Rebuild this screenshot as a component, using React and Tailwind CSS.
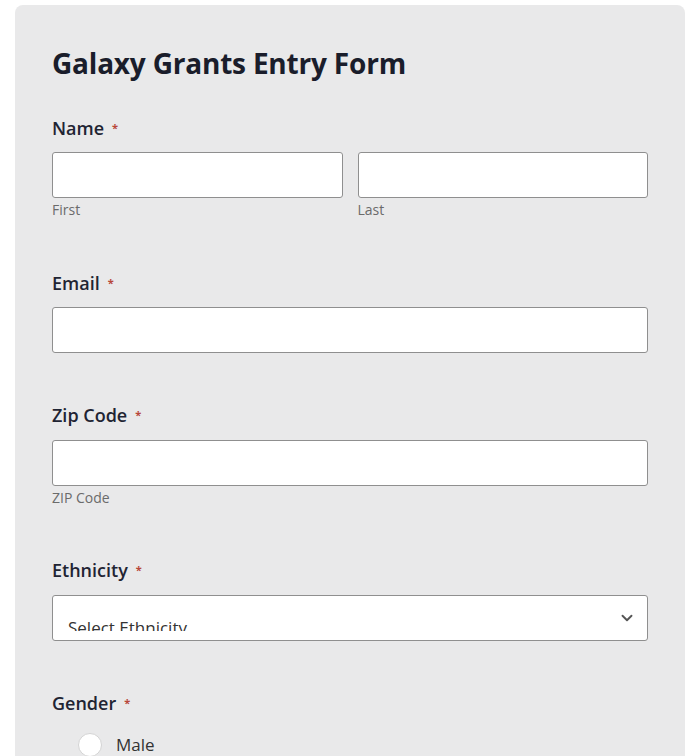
import { ChevronDown } from 'lucide-react';

function Label({ children }) {
  return (
    <div className="flex items-center gap-2 text-[18px] font-semibold leading-6 text-[#1f2433]">
      {children}
      <span className="text-[11px] font-bold text-[#b8473a]">*</span>
    </div>
  );
}

function Field({ sub }) {
  return (
    <div className="flex-1">
      <div className="h-[46px] rounded-[3px] border border-[#8f8f8f] bg-white"></div>
      {sub && <div className="mt-[2px] text-[14px] leading-5 text-[#6b6b6b]">{sub}</div>}
    </div>
  );
}

export default function App() {
  return (
    <div className="min-h-screen bg-white px-[15px] pt-[5px]" style={{ fontFamily: '"Open Sans", "Noto Sans", sans-serif' }}>
      <div className="h-[760px] overflow-hidden rounded-t-[8px] bg-[#e9e9ea] px-[37px] pt-[40px]">
        <h1 className="text-[28px] font-bold leading-9 tracking-[-0.2px] text-[#1a1d2b]">Galaxy Grants Entry Form</h1>

        <div className="mt-[35px]">
          <Label>Name</Label>
          <div className="mt-[12px] flex gap-[15px]">
            <Field sub="First" />
            <Field sub="Last" />
          </div>
        </div>

        <div className="mt-[51px]">
          <Label>Email</Label>
          <div className="mt-[12px] flex">
            <Field />
          </div>
        </div>

        <div className="mt-[50px]">
          <Label>Zip Code</Label>
          <div className="mt-[13px] flex">
            <Field sub="ZIP Code" />
          </div>
        </div>

        <div className="mt-[50px]">
          <Label>Ethnicity</Label>
          <div className="relative mt-[13px] h-[46px] rounded-[3px] border border-[#8f8f8f] bg-white">
            <div className="h-[35px] overflow-hidden pl-[15px] pt-[22px] text-[17px] leading-5 text-[#333]">Select Ethnicity</div>
            <ChevronDown className="absolute right-[11px] top-[13px] text-[#555]" size={18} strokeWidth={2.5} />
          </div>
        </div>

        <div className="mt-[50px]">
          <Label>Gender</Label>
          <div className="mt-[17px] flex items-center gap-[14px] pl-[26px]">
            <div className="h-[24px] w-[24px] rounded-full border border-[#d4d4d4] bg-white"></div>
            <span className="text-[17px] text-[#333]">Male</span>
          </div>
        </div>
      </div>
    </div>
  );
}
